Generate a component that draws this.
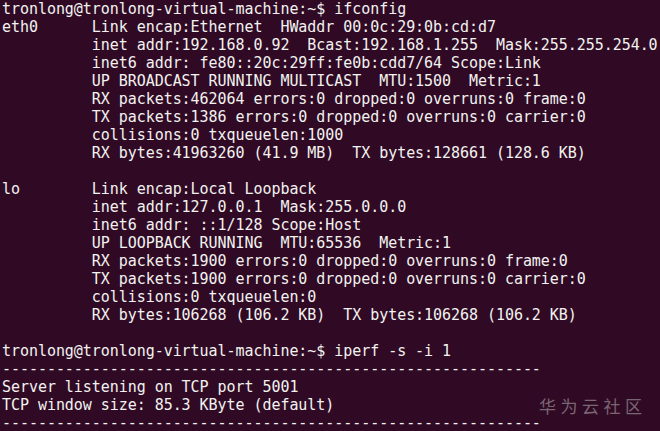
const lines = [
  "tronlong@tronlong-virtual-machine:~$ ifconfig",
  "eth0      Link encap:Ethernet  HWaddr 00:0c:29:0b:cd:d7  ",
  "          inet addr:192.168.0.92  Bcast:192.168.1.255  Mask:255.255.254.0",
  "          inet6 addr: fe80::20c:29ff:fe0b:cdd7/64 Scope:Link",
  "          UP BROADCAST RUNNING MULTICAST  MTU:1500  Metric:1",
  "          RX packets:462064 errors:0 dropped:0 overruns:0 frame:0",
  "          TX packets:1386 errors:0 dropped:0 overruns:0 carrier:0",
  "          collisions:0 txqueuelen:1000 ",
  "          RX bytes:41963260 (41.9 MB)  TX bytes:128661 (128.6 KB)",
  "",
  "lo        Link encap:Local Loopback  ",
  "          inet addr:127.0.0.1  Mask:255.0.0.0",
  "          inet6 addr: ::1/128 Scope:Host",
  "          UP LOOPBACK RUNNING  MTU:65536  Metric:1",
  "          RX packets:1900 errors:0 dropped:0 overruns:0 frame:0",
  "          TX packets:1900 errors:0 dropped:0 overruns:0 carrier:0",
  "          collisions:0 txqueuelen:0 ",
  "          RX bytes:106268 (106.2 KB)  TX bytes:106268 (106.2 KB)",
  "",
  "tronlong@tronlong-virtual-machine:~$ iperf -s -i 1",
  "------------------------------------------------------------",
  "Server listening on TCP port 5001",
  "TCP window size: 85.3 KByte (default)",
  "------------------------------------------------------------",
]

export default function App() {
  return (
    <div className="relative w-[660px] h-[431px] overflow-hidden bg-[#300a24] text-[#f2f2f0]">
      <pre className="pl-[2px] font-['DejaVu_Sans_Mono',monospace] text-[15px] leading-[18px] tracking-[-0.05px] whitespace-pre">
        {lines.map((l, i) => (
          <div key={i} className="h-[18px]">
            {l}
          </div>
        ))}
      </pre>
      <div className="absolute left-[539px] top-[395px] font-['Noto_Sans_CJK_SC',sans-serif] text-[17px] leading-[22px] tracking-[4.5px] text-[#7a6673]">
        华为云社区
      </div>
    </div>
  )
}
